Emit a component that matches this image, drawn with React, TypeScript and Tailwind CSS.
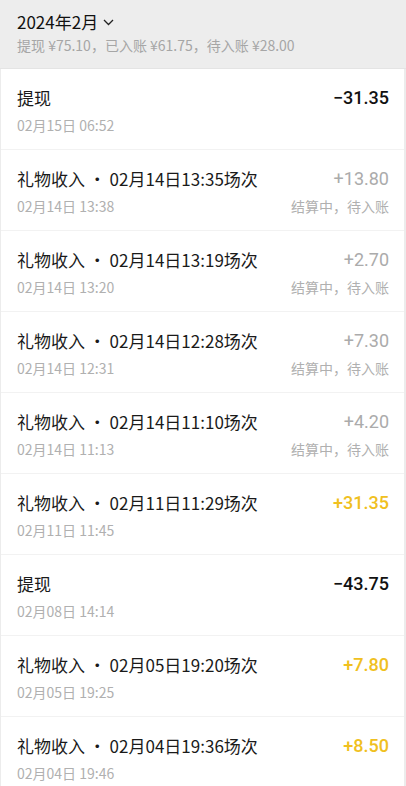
type Record = {
  title: string;
  time: string;
  amount: string;
  kind: "out" | "pending" | "done";
};

const records: Record[] = [
  { title: "提现", time: "02月15日 06:52", amount: "−31.35", kind: "out" },
  { title: "礼物收入 ・ 02月14日13:35场次", time: "02月14日 13:38", amount: "+13.80", kind: "pending" },
  { title: "礼物收入 ・ 02月14日13:19场次", time: "02月14日 13:20", amount: "+2.70", kind: "pending" },
  { title: "礼物收入 ・ 02月14日12:28场次", time: "02月14日 12:31", amount: "+7.30", kind: "pending" },
  { title: "礼物收入 ・ 02月14日11:10场次", time: "02月14日 11:13", amount: "+4.20", kind: "pending" },
  { title: "礼物收入 ・ 02月11日11:29场次", time: "02月11日 11:45", amount: "+31.35", kind: "done" },
  { title: "提现", time: "02月08日 14:14", amount: "−43.75", kind: "out" },
  { title: "礼物收入 ・ 02月05日19:20场次", time: "02月05日 19:25", amount: "+7.80", kind: "done" },
  { title: "礼物收入 ・ 02月04日19:36场次", time: "02月04日 19:46", amount: "+8.50", kind: "done" },
];

const amountColor = {
  out: "text-[#111111] font-medium",
  pending: "text-[#ababab] font-normal",
  done: "text-[#f0c020] font-medium",
};

const Row = ({ item }: { item: Record }) => {
  return (
    <div className="flex justify-between border-b border-[#f2f2f2] pl-[16px] pr-[15px] pt-[17px] pb-[15px]">
      <div className="flex flex-col">
        <span className="text-[17px] leading-[24px] text-[#1a1a1a]">{item.title}</span>
        <span className="mt-[6px] text-[14px] leading-[18px] text-[#b0b0b0]">{item.time}</span>
      </div>
      <div className="flex flex-col items-end">
        <span
          className={`text-[18px] leading-[24px] ${amountColor[item.kind]}`}
          style={{ fontFamily: 'Roboto, "Noto Sans CJK SC", sans-serif' }}
        >
          {item.amount}
        </span>
        {item.kind === "pending" && (
          <span className="mt-[6px] text-[14px] leading-[18px] text-[#b0b0b0]">结算中，待入账</span>
        )}
      </div>
    </div>
  );
};

export default function App() {
  return (
    <div
      className="h-[786px] w-[406px] overflow-hidden bg-white"
      style={{ fontFamily: '"Noto Sans CJK SC", "Noto Sans", sans-serif' }}
    >
      <div className="bg-[#ededed] pl-[17px] pt-[10px] pb-[14px] border-b border-[#e4e4e4]">
        <div className="flex items-center gap-[5px] text-[17px] leading-[24px] text-[#111111]">
          <span>2024年2月</span>
          <svg width="11" height="7" viewBox="0 0 11 7" fill="none">
            <path d="M1 1l4.5 4.5L10 1" stroke="#222" strokeWidth="1.3" />
          </svg>
        </div>
        <div className="mt-[2px] text-[14px] leading-[18px] text-[#a6a6a6]">
          提现 ¥75.10，已入账 ¥61.75，待入账 ¥28.00
        </div>
      </div>
      <div className="border-l border-r-2 border-[#ececec]">
        {records.map((r, i) => (
          <Row key={i} item={r} />
        ))}
      </div>
    </div>
  );
}
